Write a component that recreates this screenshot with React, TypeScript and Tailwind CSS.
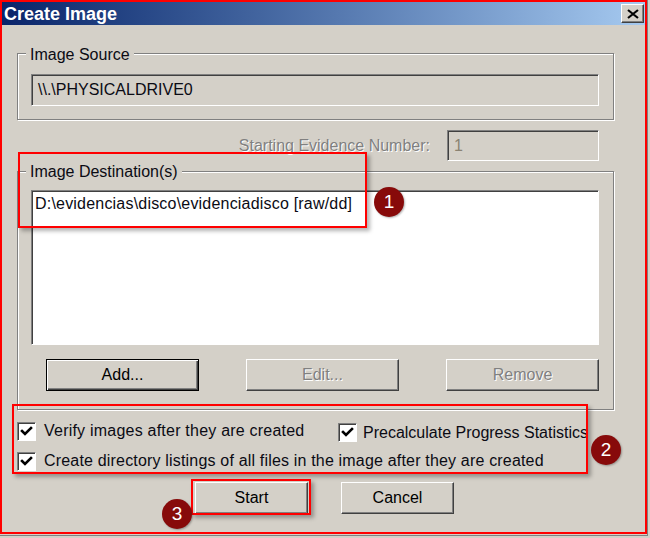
const raised =
  'border border-t-white border-l-white border-r-[#404040] border-b-[#404040] shadow-[inset_-1px_-1px_0_#808080]'
const sunken =
  'border border-t-[#808080] border-l-[#808080] border-r-white border-b-white shadow-[inset_1px_1px_0_#404040]'
const etched = 'border border-[#808080] shadow-[inset_1px_1px_0_#fff,1px_1px_0_#fff]'
const disabledText = 'text-[#808080] [text-shadow:1px_1px_0_#fff]'

function Checkbox() {
  return (
    <div className={`h-[19px] w-[19px] shrink-0 bg-white ${sunken}`}>
      <svg viewBox="0 0 17 17" className="h-full w-full" aria-hidden>
        <path d="M4 8 L7 11 L13 5" fill="none" stroke="#000" strokeWidth="2.6" strokeLinecap="square" />
      </svg>
    </div>
  )
}

function Badge({ n, className }: { n: number; className: string }) {
  return (
    <div
      className={`absolute flex h-[30px] w-[30px] items-center justify-center rounded-full bg-[#870a0a] text-[19px] text-white shadow-[1px_1px_2px_rgba(0,0,0,0.3)] ${className}`}
    >
      {n}
    </div>
  )
}

function Button({ label, disabled, isDefault }: { label: string; disabled?: boolean; isDefault?: boolean }) {
  const frame = isDefault
    ? 'border border-black shadow-[inset_1px_1px_0_#fff,inset_-1px_-1px_0_#404040,inset_-2px_-2px_0_#808080]'
    : raised
  return (
    <div className={`flex h-[32px] items-center justify-center bg-[#d4d0c8] ${frame} ${disabled ? disabledText : 'text-black'}`}>
      {label}
    </div>
  )
}

export default function App() {
  return (
    <div className="relative h-[538px] w-[650px] overflow-hidden bg-[#d4d0c8] font-['Liberation_Sans',Arial,sans-serif] text-[16px] leading-[18px] text-[#0b0b14]">
      <div className="h-[536px] w-[648px] border-r border-b border-[#808080]">
        <div className="flex h-[534px] w-[647px] flex-col border-2 border-[#ff0000]">
          {/* title bar */}
          <div className="flex h-[23px] shrink-0 items-center justify-between bg-linear-to-r from-[#0a246a] to-[#a6caf0] pl-[2px] pr-[1px]">
            <span className="text-[18px] font-bold text-white">Create Image</span>
            <div className={`flex h-[19px] w-[23px] items-center justify-center bg-[#d4d0c8] ${raised}`}>
              <svg viewBox="0 0 14 10" className="h-[10px] w-[14px]" aria-hidden>
                <path d="M2 1 L12 9 M12 1 L2 9" stroke="#000" strokeWidth="2.2" />
              </svg>
            </div>
          </div>

          <div className="flex w-[613px] flex-col pl-[15px] pt-[19px]">
            {/* image source */}
            <fieldset className={`w-[597px] ${etched}`}>
              <legend className="ml-[8px] bg-[#d4d0c8] px-[4px]">
                <span className="relative top-[2px]">Image Source</span>
              </legend>
              <div className="pb-[13px] pl-[13px] pr-[14px] pt-[12px]">
                <div className={`flex h-[32px] w-[568px] items-center bg-[#d4d0c8] pl-[6px] ${sunken}`}>
                  {'\\\\.\\PHYSICALDRIVE0'}
                </div>
              </div>
            </fieldset>

            {/* starting evidence number */}
            <div className="mt-[10px] flex h-[31px] w-[598px] items-center justify-end pr-[16px]">
              <span className={`mr-[17px] ${disabledText}`}>Starting Evidence Number:</span>
              <div className={`flex h-[31px] w-[152px] items-center bg-[#d4d0c8] pl-[6px] text-[#8a8272] ${sunken}`}>1</div>
            </div>

            {/* image destinations */}
            <fieldset className={`mt-[1px] w-[597px] ${etched}`}>
              <legend className="ml-[8px] bg-[#d4d0c8] px-[4px]">
                <span className="relative top-[1px]">Image Destination(s)</span>
              </legend>
              <div className="pb-[18px] pl-[13px] pr-[14px] pt-[10px]">
                <div className={`h-[155px] w-[568px] bg-white pl-[3px] pt-[4px] tracking-[0.2px] ${sunken}`}>
                  {'D:\\evidencias\\disco\\evidenciadisco [raw/dd]'}
                </div>
                <div className="mt-[14px] flex gap-[47px] pl-[15px]">
                  <div className="w-[153px]">
                    <Button label="Add..." isDefault />
                  </div>
                  <div className="w-[153px]">
                    <Button label="Edit..." disabled />
                  </div>
                  <div className="w-[153px]">
                    <Button label="Remove" disabled />
                  </div>
                </div>
              </div>
            </fieldset>

            {/* options */}
            <div className="mt-[11px] flex h-[20px] items-center">
              <div className="flex w-[321px] items-center">
                <Checkbox />
                <span className="ml-[8px] whitespace-nowrap tracking-[0.22px]">Verify images after they are created</span>
              </div>
              <div className="mt-[3px] flex items-center">
                <Checkbox />
                <span className="ml-[6px] whitespace-nowrap">Precalculate Progress Statistics</span>
              </div>
            </div>
            <div className="mt-[10px] flex h-[20px] items-center">
              <Checkbox />
              <span className="ml-[8px] whitespace-nowrap tracking-[0.18px]">
                Create directory listings of all files in the image after they are created
              </span>
            </div>

            {/* actions */}
            <div className="mt-[11px] flex gap-[33px] pl-[178px]">
              <div className="w-[113px]">
                <Button label="Start" />
              </div>
              <div className="w-[113px]">
                <Button label="Cancel" />
              </div>
            </div>
          </div>
        </div>
      </div>

      {/* annotations */}
      <div className="absolute left-[18px] top-[152px] h-[76px] w-[349px] border-2 border-[#ff0000] shadow-[3px_3px_4px_rgba(0,0,0,0.3)]" />
      <div className="absolute left-[12px] top-[404px] h-[70px] w-[576px] border-2 border-[#ff0000] shadow-[3px_3px_4px_rgba(0,0,0,0.3)]" />
      <div className="absolute left-[191px] top-[479px] h-[36px] w-[120px] border-2 border-[#ff0000] shadow-[3px_3px_4px_rgba(0,0,0,0.3)]" />
      <Badge n={1} className="left-[374px] top-[187px]" />
      <Badge n={2} className="left-[591px] top-[435px]" />
      <Badge n={3} className="left-[162px] top-[499px]" />
    </div>
  )
}
